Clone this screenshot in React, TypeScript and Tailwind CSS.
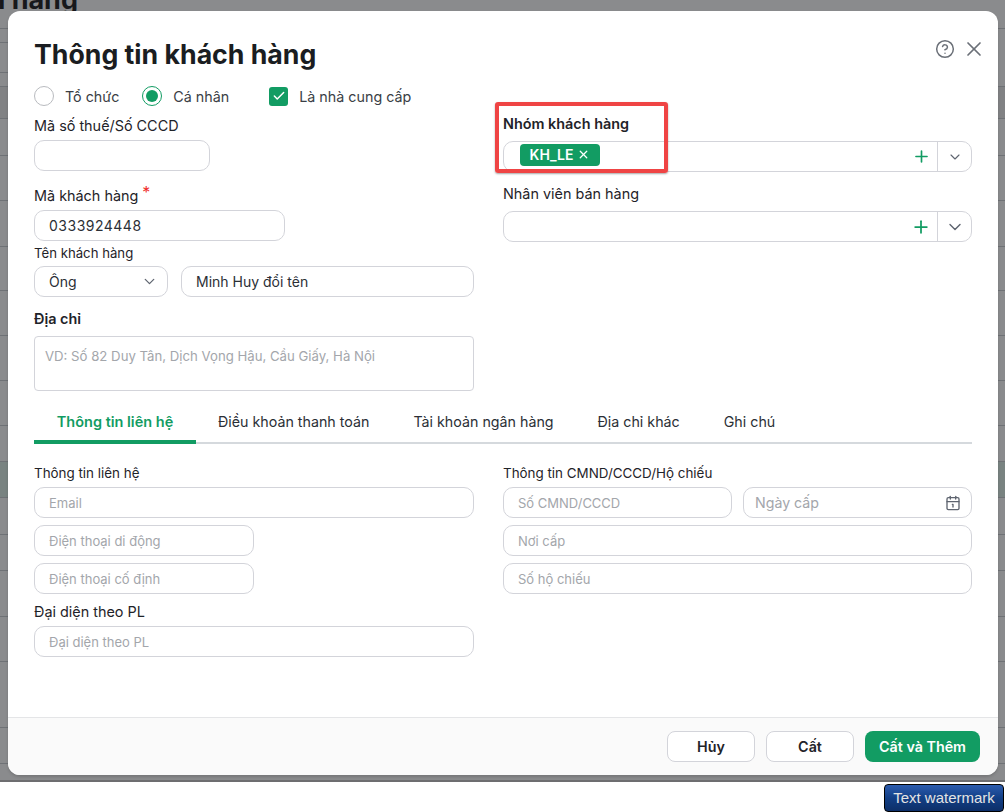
import { Calendar1, Check, ChevronDown, CircleHelp, Plus, X } from "lucide-react";
import type { ReactNode } from "react";

const rightLines = [29, 87, 119, 156, 201, 247, 291, 336, 381, 426, 462, 498, 535, 571, 617, 662, 728, 764];
const leftLines = [29, 43, 73, 87, 119, 156, 201, 247, 291, 336, 381, 426, 462, 498, 535, 571, 617, 662, 728, 764];
const tabs = ["Điều khoản thanh toán", "Tài khoản ngân hàng", "Địa chỉ khác", "Ghi chú"];

function rowTint(bottom: number) {
  if (bottom === 498) return "border-b border-[#c9ccd0] bg-[#dcefe6]";
  if (bottom === 119) return "border-b border-[#c9ccd0] bg-[#ececec]";
  return "border-b border-[#c9ccd0]";
}

function LineColumn({ lines, className }: { lines: number[]; className: string }) {
  return (
    <div className={`flex flex-col ${className}`}>
      {lines.map((bottom, i) => (
        <div key={bottom} className={rowTint(bottom)} style={{ height: bottom - (i === 0 ? 0 : lines[i - 1]) }} />
      ))}
    </div>
  );
}

function Label({ children, bold, className }: { children: ReactNode; bold?: boolean; className?: string }) {
  return (
    <div className={`leading-[20px] text-[#1f2329] ${bold ? "font-semibold" : ""} ${className ?? "text-[14.4px]"}`}>
      {children}
    </div>
  );
}

function Field({ value, placeholder, className }: { value?: string; placeholder?: string; className?: string }) {
  return (
    <div
      className={`flex h-[31px] items-center rounded-[10px] border border-[#d3d4da] bg-white px-[14px] ${value ? "text-[14px] text-[#2b2f36]" : "pt-[2px] text-[13px] text-[#a3a6ab]"} ${className ?? ""}`}
    >
      {value ?? placeholder}
    </div>
  );
}

function Combo({ children, small }: { children?: ReactNode; small?: boolean }) {
  return (
    <div className="flex h-[31px] items-center rounded-[10px] border border-[#d3d4da] bg-white">
      <div className="min-w-0 flex-1 pl-[16px]">{children}</div>
      <Plus className="mr-[6px] text-[#129c63]" size={small ? 19 : 20} strokeWidth={2.1} />
      <div className="flex h-full w-[34px] items-center justify-center border-l border-[#d3d4da]">
        <ChevronDown className="text-[#5f6570]" size={small ? 16 : 20} strokeWidth={1.7} />
      </div>
    </div>
  );
}

function Radio({ checked, label }: { checked?: boolean; label: string }) {
  return (
    <div className="flex items-center gap-[11px]">
      <span
        className={`flex size-[20px] items-center justify-center rounded-full border bg-white ${checked ? "border-[#129c63]" : "border-[#b9bbbf]"}`}
      >
        {checked && <span className="size-[12px] rounded-full bg-[#129c63]" />}
      </span>
      <span className="pt-px text-[14.3px] text-[#3a3e45]">{label}</span>
    </div>
  );
}

function FooterButton({ children, primary }: { children: ReactNode; primary?: boolean }) {
  return (
    <button
      type="button"
      className={`flex h-[31px] items-center justify-center rounded-[8px] text-[14.3px] font-semibold ${primary ? "w-[115px] bg-[#129c63] text-white" : "w-[88px] border border-[#d3d4da] bg-white text-[#1f2329]"}`}
    >
      {children}
    </button>
  );
}

export default function App() {
  return (
    <div className="relative h-[812px] w-[1005px] overflow-hidden bg-white font-['Inter',sans-serif]">
      <div className="flex h-[782px] overflow-hidden">
        <LineColumn className="w-[8px]" lines={leftLines} />
        <LineColumn className="flex-1" lines={rightLines} />
      </div>
      <div className="absolute inset-x-0 top-0 h-[782px] border-b-2 border-[#6d6d70] bg-[#15171c]/50">
        <div className="absolute -top-[16px] right-[927px] text-[27px] leading-[32px] font-bold whitespace-nowrap text-[#17181b]">
          Khách hàng
        </div>
      </div>

      <div className="absolute top-[11px] left-[8px] flex h-[764px] w-[990px] flex-col overflow-hidden rounded-[12px] bg-white shadow-[0_2px_3px_rgba(0,0,0,0.15)]">
        <div className="flex-1 px-[26px]">
          <div className="flex items-start justify-between pt-[25px]">
            <h1 className="text-[26.7px] leading-[36px] font-bold text-[#1a1d21]">Thông tin khách hàng</h1>
            <div className="-mr-[14px] flex items-center gap-[7px] pt-px text-[#6b7078]">
              <CircleHelp size={20} strokeWidth={1.8} />
              <X size={24} strokeWidth={1.7} />
            </div>
          </div>

          <div className="mt-[13px] flex h-[22px] items-center">
            <Radio label="Tổ chức" />
            <div className="ml-[23px]">
              <Radio checked label="Cá nhân" />
            </div>
            <div className="ml-[40px] flex items-center gap-[11px]">
              <span className="flex size-[19px] items-center justify-center rounded-[3px] bg-[#129c63]">
                <Check className="text-white" size={14} strokeWidth={2.5} />
              </span>
              <span className="pt-px text-[14.3px] text-[#3a3e45]">Là nhà cung cấp</span>
            </div>
          </div>

          <div className="grid grid-cols-[440px_469px] gap-x-[29px]">
            <div>
              <Label className="mt-[9px] text-[14.4px]">Mã số thuế/Số CCCD</Label>
              <Field className="mt-[4px] w-[176px]" />
              <Label className="mt-[14px] text-[14.4px]">
                Mã khách hàng <span className="relative -top-[3px] text-[16px] text-[#ef2b2b]">*</span>
              </Label>
              <Field className="mt-[4px] w-[251px] tracking-[0.5px]" value="0333924448" />
              <Label className="mt-[2px] text-[13.2px]">Tên khách hàng</Label>
              <div className="mt-[3px] flex gap-[13px]">
                <div className="flex h-[31px] w-[134px] items-center justify-between rounded-[10px] border border-[#d3d4da] pr-[9px] pl-[14px] text-[14px] text-[#2b2f36]">
                  Ông
                  <ChevronDown className="text-[#5f6570]" size={17} strokeWidth={1.8} />
                </div>
                <Field className="flex-1" value="Minh Huy đổi tên" />
              </div>
              <Label bold className="mt-[12px] text-[14.4px]">Địa chỉ</Label>
              <div className="mt-[7px] h-[55px] rounded-[4px] border border-[#d3d4da] px-[10px] py-[9px] text-[13.2px] leading-[20px] text-[#a3a6ab]">
                VD: Số 82 Duy Tân, Dịch Vọng Hậu, Cầu Giấy, Hà Nội
              </div>
            </div>
            <div>
              <Label bold className="mt-[7px] text-[14.4px]">Nhóm khách hàng</Label>
              <div className="mt-[7px]">
                <Combo small>
                  <span className="-mt-px inline-flex h-[22px] w-[80px] items-center justify-center gap-[4px] rounded-[4px] bg-[#129c63] align-top text-[14px] font-semibold text-white">
                    KH_LE
                    <X size={13} strokeWidth={2.3} />
                  </span>
                </Combo>
              </div>
              <Label className="mt-[12px] text-[14.4px]">Nhân viên bán hàng</Label>
              <div className="mt-[7px]">
                <Combo />
              </div>
            </div>
          </div>

          <div className="mt-[20px] flex h-[33px] items-start border-b-2 border-[#d5d9dd]">
            <div className="h-[33px] w-[162px] border-b-4 border-[#129c63] pt-px text-center text-[14.5px] leading-[20px] font-semibold text-[#129c63]">
              Thông tin liên hệ
            </div>
            {tabs.map((tab) => (
              <div key={tab} className="px-[22px] pt-px text-[14.25px] leading-[20px] text-[#2b2f36]">
                {tab}
              </div>
            ))}
          </div>

          <div className="grid grid-cols-[440px_469px] gap-x-[29px]">
            <div>
              <Label className="mt-[19px] text-[13.4px]">Thông tin liên hệ</Label>
              <Field className="mt-[4px]" placeholder="Email" />
              <Field className="mt-[7px] w-[220px]" placeholder="Điện thoại di động" />
              <Field className="mt-[7px] w-[220px]" placeholder="Điện thoại cố định" />
              <Label className="mt-[8px] text-[14.4px]">Đại diện theo PL</Label>
              <Field className="mt-[4px]" placeholder="Đại diện theo PL" />
            </div>
            <div>
              <Label className="mt-[19px] text-[13.4px]">Thông tin CMND/CCCD/Hộ chiếu</Label>
              <div className="mt-[4px] grid grid-cols-2 gap-[11px]">
                <Field placeholder="Số CMND/CCCD" />
                <div className="flex h-[31px] items-center justify-between rounded-[10px] border border-[#d3d4da] pr-[10px] pl-[11px] text-[14.2px] text-[#a3a6ab]">
                  Ngày cấp
                  <Calendar1 className="text-[#5f6570]" size={16} strokeWidth={2} />
                </div>
              </div>
              <Field className="mt-[7px]" placeholder="Nơi cấp" />
              <Field className="mt-[7px]" placeholder="Số hộ chiếu" />
            </div>
          </div>
        </div>

        <div className="flex h-[58px] shrink-0 items-start justify-end gap-[11px] border-t border-[#e4e5e7] bg-[#fafafa] pt-[13px] pr-[18px]">
          <FooterButton>Hủy</FooterButton>
          <FooterButton>Cất</FooterButton>
          <FooterButton primary>Cất và Thêm</FooterButton>
        </div>
      </div>

      <div className="absolute top-[102px] left-[495px] h-[71px] w-[173px] rounded-[3px] border-4 border-[#ef4444] shadow-[0_1px_2px_rgba(0,0,0,0.35)]" />

      <div className="absolute top-[784px] left-[884px] flex h-[28px] w-[120px] items-center justify-center rounded-[4px] border border-black bg-gradient-to-b from-[#2c5cae] via-[#123f86] to-[#0d2f68] font-['Liberation_Sans',sans-serif] text-[15px] text-[#e4e4e4]">
        Text watermark
      </div>
    </div>
  );
}
